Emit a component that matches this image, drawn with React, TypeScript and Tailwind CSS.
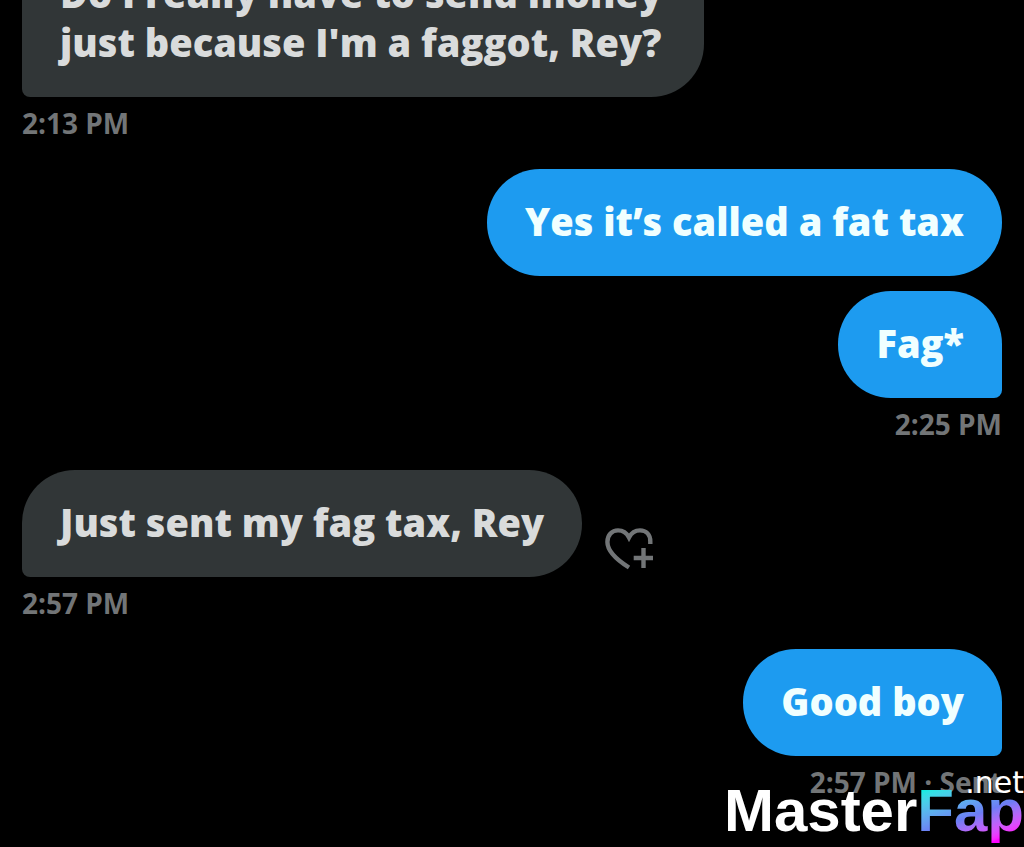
import clsx from "clsx";

type Message = { text: string; reactable?: boolean };
type Group = { mine: boolean; time: string; messages: Message[] };

const GROUPS: Group[] = [
  {
    mine: false,
    time: "2:13 PM",
    messages: [{ text: "Do I really have to send money just because I'm a faggot, Rey?" }],
  },
  {
    mine: true,
    time: "2:25 PM",
    messages: [{ text: "Yes it’s called a fat tax" }, { text: "Fag*" }],
  },
  {
    mine: false,
    time: "2:57 PM",
    messages: [{ text: "Just sent my fag tax, Rey", reactable: true }],
  },
  {
    mine: true,
    time: "2:57 PM · Sent",
    messages: [{ text: "Good boy" }],
  },
];

function HeartPlus() {
  return (
    <svg viewBox="0 0 52 48" className="h-12 w-13" fill="none" stroke="currentColor" strokeWidth="4.4" aria-hidden>
      <path d="M25 41.500C13 34 3.400 26 3.400 16C3.400 9 8 4.400 14 4.400C18.500 4.400 22.500 6.700 25 11.500C27.500 6.700 31.500 4.400 36 4.400C42 4.400 46.300 8.500 46.300 15.500V18" />
      <path d="M39.500 22V42M29.700 32H49" />
    </svg>
  );
}

/** One bubble. The last one of a group gets the squared-off tail corner. */
function Bubble({ message, mine, last }: { message: Message; mine: boolean; last: boolean }) {
  return (
    <div className={clsx("flex items-end gap-[22px]", mine && "justify-end")}>
      <p
        className={clsx(
          "max-w-[682px] rounded-[53px] px-[38px] pt-7 pb-[30px] text-[38px] leading-[49px] font-extrabold",
          mine ? "bg-[#1d9bf0] text-[#f0ffff]" : "bg-[#313637] text-[#d9dbdb]",
          last && (mine ? "rounded-br-lg" : "rounded-bl-lg")
        )}
      >
        {message.text}
      </p>
      {message.reactable && (
        <button type="button" aria-label="Add reaction" className="shrink-0 pb-[3px] text-[#727577]">
          <HeartPlus />
        </button>
      )}
    </div>
  );
}

function Watermark() {
  return (
    <a href="#" className="absolute right-0 bottom-0 block font-['Liberation_Sans',sans-serif]">
      <span className="absolute right-0 bottom-12 font-['DejaVu_Sans',sans-serif] text-[30px] leading-8 text-white">
        .net
      </span>
      <span className="flex text-[60px] leading-[72px] font-bold text-white">
        Master
        <span className="bg-linear-160 from-[#00f0e0] from-15% via-[#6d7df5] via-55% to-[#ff00ff] to-85% bg-clip-text text-transparent">
          Fap
        </span>
      </span>
    </a>
  );
}

export default function App() {
  return (
    <main className="relative flex h-screen flex-col justify-end gap-[30px] overflow-hidden bg-black px-[22px] pb-[49px] font-['Open_Sans',sans-serif]">
      {GROUPS.map((group, i) => (
        <section key={i} className="shrink-0">
          <div className="flex flex-col gap-[15px]">
            {group.messages.map((message, j) => (
              <Bubble key={j} message={message} mine={group.mine} last={j === group.messages.length - 1} />
            ))}
          </div>
          <p className={clsx("mt-[10px] text-[28px] leading-8 font-bold text-[#727577]", group.mine && "text-right")}>
            {group.time}
          </p>
        </section>
      ))}
      <Watermark />
    </main>
  );
}
